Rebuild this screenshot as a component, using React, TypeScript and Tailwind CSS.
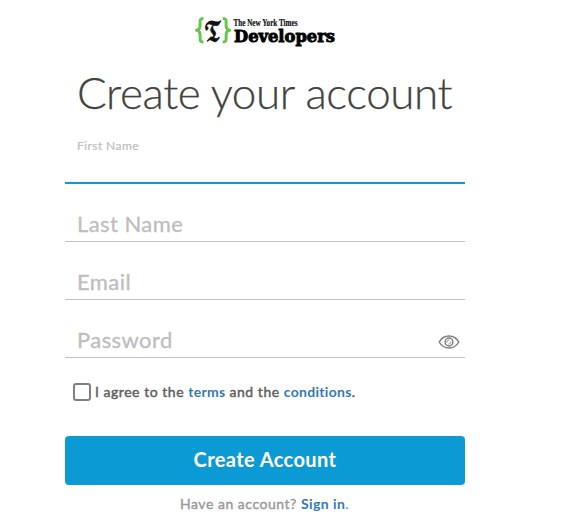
import React from 'react';

function Logo() {
  return (
    <svg width="142" height="32" viewBox="0 0 142 32" role="img" aria-label="The New York Times Developers">
      <g fill="none" stroke="#67c649" strokeWidth="3" strokeLinejoin="round">
        <path d="M9.500 3.500C6.100 3.500 6 4.900 6.100 7.800C6.300 12.300 6.100 14.700 2.500 15.300C6.100 15.900 6.300 18.300 6.100 22.800C6 25.700 6.100 27.100 9.500 27.100" />
        <path d="M28.700 3.500C32.100 3.500 32.200 4.900 32.100 7.800C31.900 12.300 32.100 14.700 35.700 15.300C32.100 15.900 31.900 18.300 32.100 22.800C32.200 25.700 32.100 27.100 28.700 27.100" />
      </g>
      <text transform="translate(10 25.500) scale(1 1.160)" textLength="18" lengthAdjust="spacingAndGlyphs" fill="#111" stroke="#111" strokeWidth="0.8" fontSize="23" fontFamily="'DejaVu Math TeX Gyre', 'DejaVu Sans', serif">𝕿</text>
      <text x="39.500" y="11" textLength="64" lengthAdjust="spacingAndGlyphs" fill="#111" stroke="#111" strokeWidth="0.2" fontSize="9.500" fontWeight="700" fontFamily="'Liberation Serif', serif">The New York Times</text>
      <text x="40" y="27" textLength="101" lengthAdjust="spacingAndGlyphs" fill="#000" stroke="#000" strokeWidth="0.9" fontSize="16.500" fontWeight="700" fontFamily="'DejaVu Serif', serif">Developers</text>
    </svg>
  );
}

function EyeIcon() {
  return (
    <svg width="22" height="16" viewBox="0 0 22 16" fill="none" stroke="#808080" strokeWidth="1.500">
      <path d="M1.200 8C3.500 4 7 2 11 2S18.500 4 20.800 8C18.500 12 15 14 11 14S3.500 12 1.200 8Z" />
      <circle cx="11" cy="8" r="3.900" />
      <path d="M9 8.500A2.100 2.100 0 0 1 11.300 6M12.800 7.500A2.100 2.100 0 0 1 10.500 10" strokeWidth="1" />
    </svg>
  );
}

function Field({ label, icon }: { label: string; icon?: React.ReactNode }) {
  return (
    <label className="flex h-[58px] items-end justify-between border-b border-[#c4c4c4] pl-[12px] pr-[5px]">
      <span className="pb-[3px] text-[22px] leading-[28px] tracking-[0.43px] text-[#bdbdbd] [-webkit-text-stroke:0.3px]">{label}</span>
      {icon}
    </label>
  );
}

export default function App() {
  return (
    <main className="h-[529px] w-[574px] bg-white font-['Lato',sans-serif]">
      <form className="ml-[65px] flex w-[400px] flex-col">
        <header className="flex h-[62px] justify-center pt-[15px]">
          <Logo />
        </header>
        <h1 className="h-[68px] whitespace-nowrap pl-[12px] text-[44px] font-light leading-[61px] tracking-[-0.42px] text-[#424242] [-webkit-text-stroke:0.25px]">Create your account</h1>
        <label className="h-[54px] border-b-2 border-[#0c9ad4] pl-[12px] pt-[8px] text-[12px] leading-[16px] tracking-[0.43px] text-[#bdbdbd] [-webkit-text-stroke:0.2px]">First Name</label>
        <Field label="Last Name" />
        <Field label="Email" />
        <Field label="Password" icon={<span className="pb-[7px]"><EyeIcon /></span>} />
        <div className="mt-[24px] flex h-[20px] items-center pl-[8px] text-[14px] tracking-[0.53px] text-[#606060] [-webkit-text-stroke:0.45px]">
          <span className="mr-[4px] h-[18px] w-[18px] rounded-[3px] border-2 border-[#808080]" />
          <span className="whitespace-pre pb-[1px]">I agree to the <a className="font-bold tracking-[0.3px] text-[#337ab7] [-webkit-text-stroke:0px]">terms</a> and the <a className="font-bold tracking-[0.3px] text-[#337ab7] [-webkit-text-stroke:0px]">conditions</a>.</span>
        </div>
        <button type="button" className="mt-[34px] h-[49px] rounded-[4px] bg-[#0c9ad4] pb-[3px] text-[20px] font-bold tracking-[0.4px] text-white">Create Account</button>
        <p className="mt-[9px] pr-[1px] text-center text-[14px] leading-[20px] tracking-[0.53px] text-[#999] [-webkit-text-stroke:0.4px]">Have an account? <a className="font-bold tracking-[0.4px] text-[#337ab7] [-webkit-text-stroke:0px]">Sign in</a>.</p>
      </form>
    </main>
  );
}
